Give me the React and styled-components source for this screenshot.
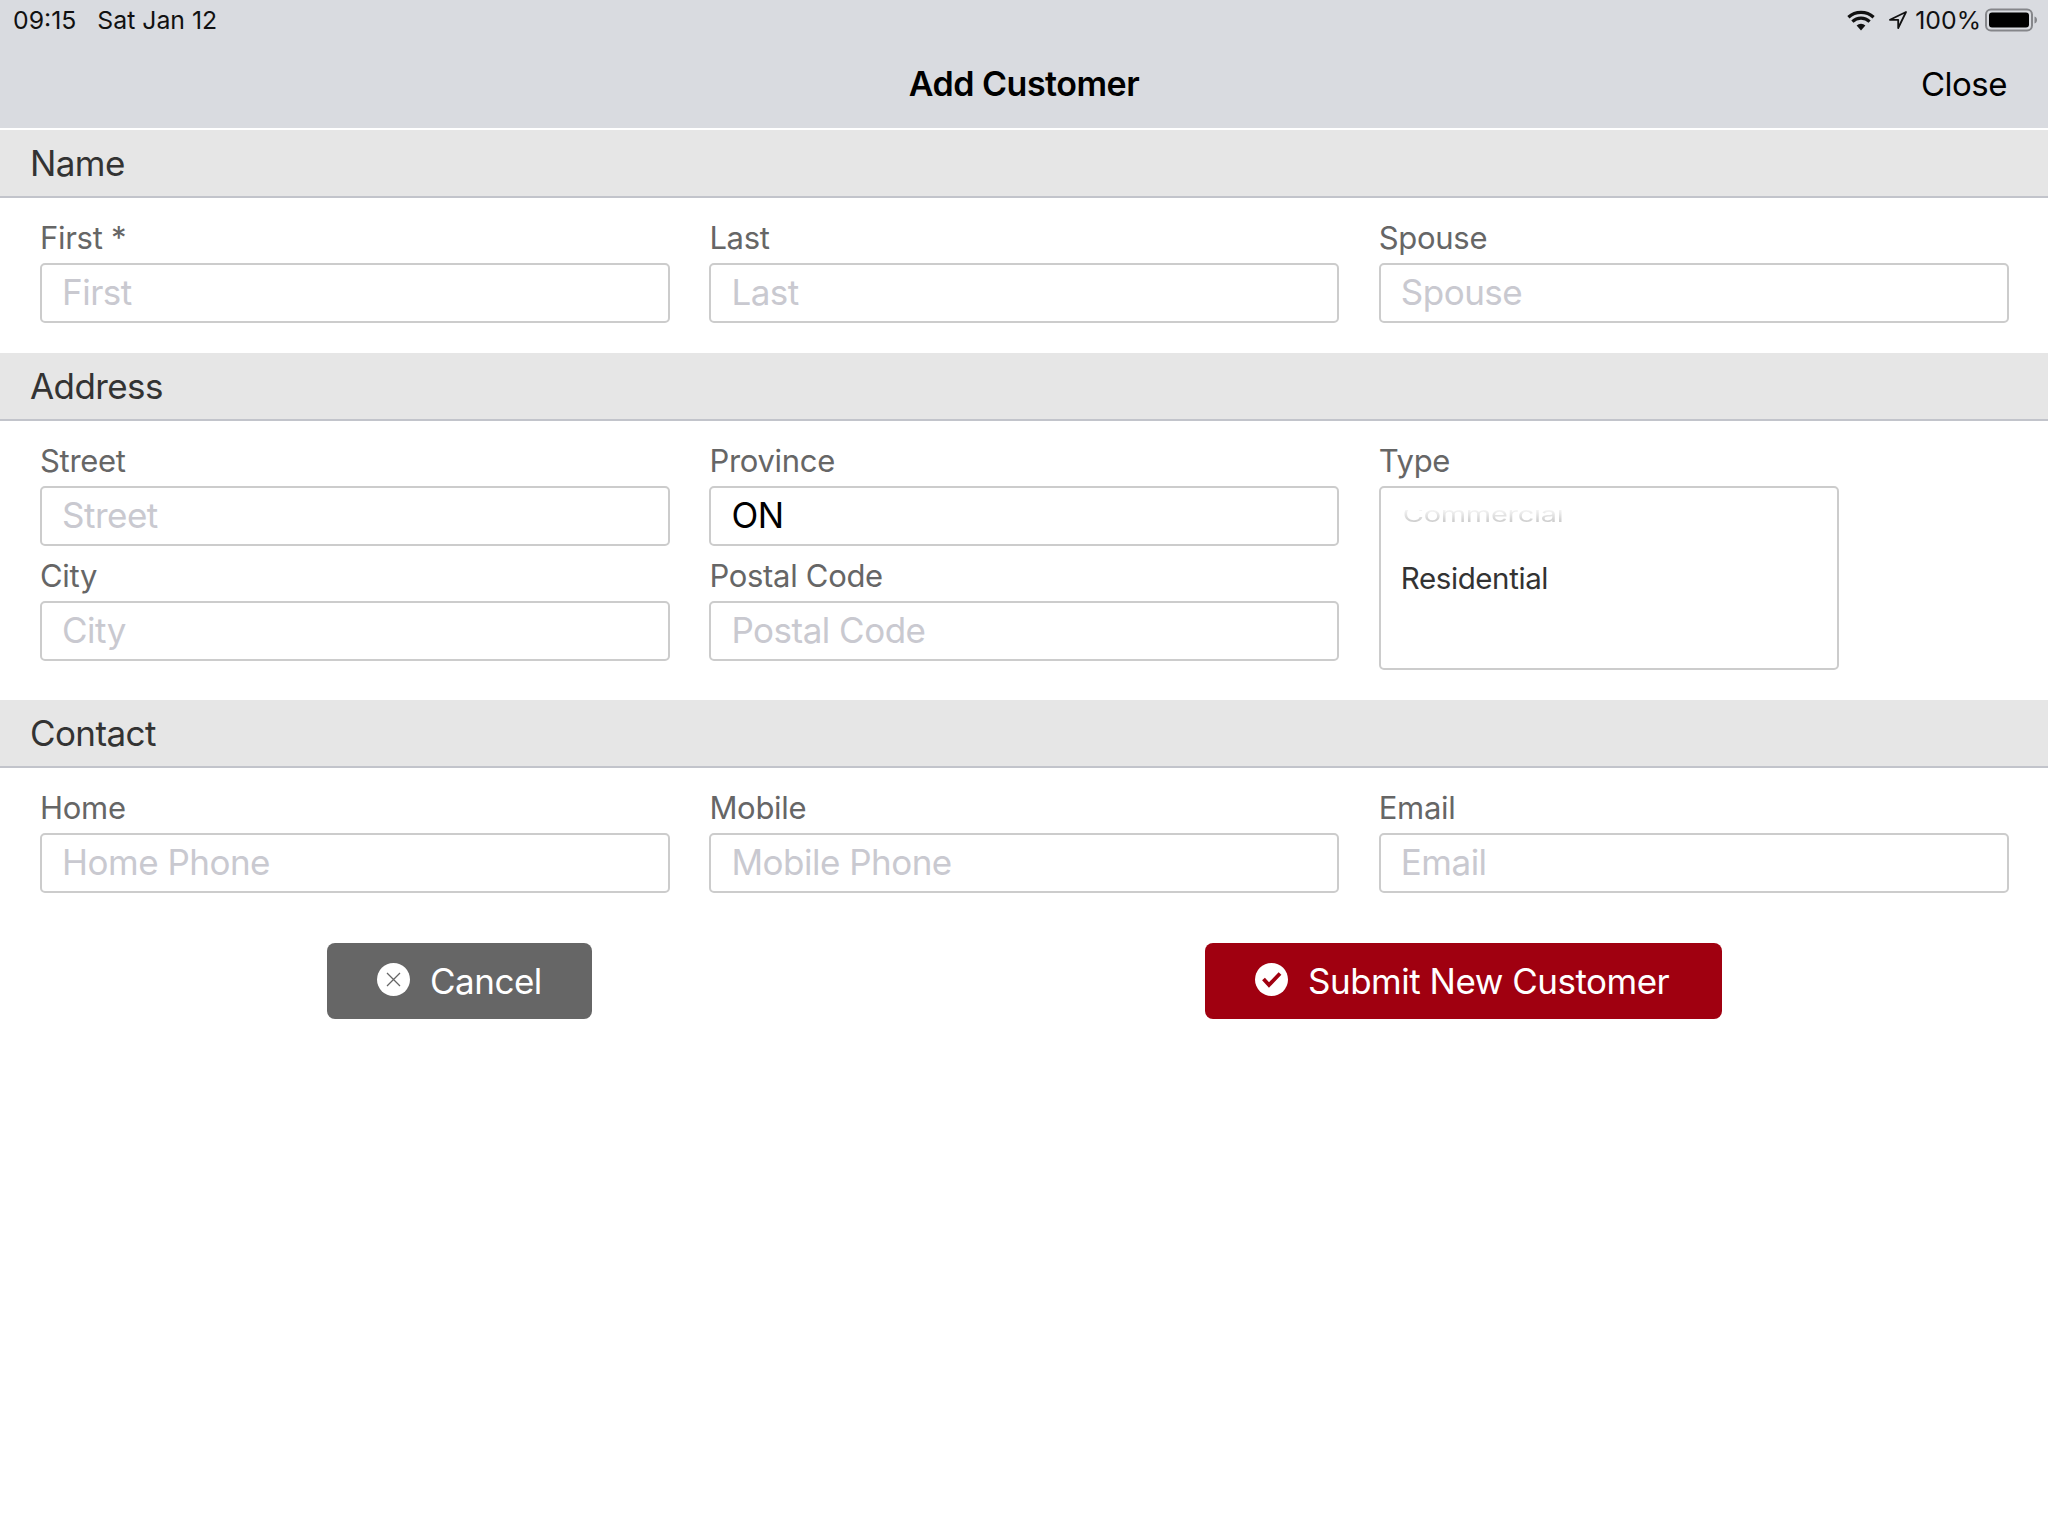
import React from 'react'
import styled, { createGlobalStyle } from 'styled-components'

const GlobalStyle = createGlobalStyle`
  html, body { margin: 0; padding: 0; background: #fff; }
  body { font-family: Inter, "Liberation Sans", sans-serif; }
  * { box-sizing: border-box; }
`

const Page = styled.div`
  width: 2048px;
  height: 1536px;
  background: #fff;
  overflow: hidden;
`

const TopBar = styled.header`
  height: 128px;
  background: #d9dbe0;
`

const StatusBar = styled.div`
  height: 40px;
  padding: 0 11px 0 13px;
  display: flex;
  align-items: center;
  justify-content: space-between;
  font-size: 24.8px;
  color: #111;
`

const StatusGroup = styled.div`
  display: flex;
  align-items: center;
  gap: ${p => p.$gap || 21}px;
  svg + svg { margin-left: 6px; }
  span + svg { margin-left: -3px; }
`

const NavBar = styled.div`
  height: 88px;
  padding: 0 41px;
  display: grid;
  grid-template-columns: 1fr auto 1fr;
  align-items: center;
  font-size: 34px;
  color: #000;
`

const NavTitle = styled.div`
  margin-bottom: 2px;
  font-weight: 600;
  letter-spacing: -0.5px;
`

const NavAction = styled.div`
  justify-self: end;
  font-size: 33px;
  letter-spacing: -0.5px;
`

const SectionHeader = styled.div`
  height: 68px;
  padding: 0 30px 1px;
  display: flex;
  align-items: center;
  font-size: 35px;
  letter-spacing: -0.6px;
  color: #333;
  background: #e6e6e6;
  border-bottom: 2px solid #c2c4cb;
  margin-top: ${p => p.$first ? 2 : 0}px;
`

const SectionBody = styled.div`
  padding: 21px 0 30px 40px;
  display: grid;
  grid-template-columns: repeat(3, 630px);
  grid-template-rows: ${p => p.$rows || 'auto'};
  column-gap: 39.4px;
  row-gap: 11px;
  align-items: start;
`

const Field = styled.div`
  display: flex;
  flex-direction: column;
`

const PickerField = styled(Field)`
  grid-column: 3;
  grid-row: 1 / span 2;
`

const Label = styled.label`
  height: 44px;
  font-size: 31px;
  line-height: 38px;
  letter-spacing: -0.3px;
  color: #666;
`

const Input = styled.input`
  width: 100%;
  height: 60px;
  padding: 0 20px 2px;
  font-family: inherit;
  font-size: 35px;
  letter-spacing: -0.5px;
  color: #000;
  background: #fff;
  border: 2px solid #ccc;
  border-radius: 5px;
  outline: none;
  &::placeholder { color: #c9c9d0; opacity: 1; }
`

const Picker = styled.div`
  width: 460px;
  height: 184px;
  padding: 0 20px;
  border: 2px solid #ccc;
  border-radius: 5px;
  overflow: hidden;
`

const FadedOption = styled.div`
  height: 34px;
  margin-top: 10px;
  padding-left: 2px;
  font-size: 29px;
  line-height: 34px;
  letter-spacing: -0.3px;
  color: transparent;
  background: linear-gradient(#f4f4f4 30%, #cfcfcf 75%);
  background-clip: text;
  -webkit-background-clip: text;
  transform: scaleY(0.72);
  clip-path: inset(30% 0 0 0);
`

const ActiveOption = styled.div`
  margin-top: 26px;
  font-size: 29.5px;
  line-height: 40px;
  letter-spacing: -0.4px;
  color: #333;
`

const Actions = styled.div`
  padding: 20px 326px 0 327px;
  display: flex;
  justify-content: space-between;
`

const Button = styled.button`
  height: 76px;
  width: ${p => p.$width}px;
  padding: 0 0 0 50px;
  display: flex;
  align-items: center;
  gap: 20px;
  border: none;
  border-radius: 8px;
  font-family: inherit;
  font-size: 35px;
  letter-spacing: -0.5px;
  color: #fff;
  background: ${p => p.$color};
  svg { margin-top: -4px; flex: none; }
`

const Wifi = () => (
  <svg width="28" height="21" viewBox="0 0 28 21">
    <path d="M14 20.5 9.6 15.4a6.6 6.6 0 0 1 8.8 0z" fill="#111" />
    <path d="M5.4 11.6a12.6 12.6 0 0 1 17.2 0" fill="none" stroke="#111" strokeWidth="3.2" />
    <path d="M1.4 7.2a18.6 18.6 0 0 1 25.2 0" fill="none" stroke="#111" strokeWidth="3.2" />
  </svg>
)

const LocationArrow = () => (
  <svg width="20" height="20" viewBox="0 0 20 20">
    <path d="M18 2 2 9.8h8.2l0 8.2z" fill="none" stroke="#111" strokeWidth="1.8" strokeLinejoin="round" />
  </svg>
)

const Battery = () => (
  <svg width="52" height="24" viewBox="0 0 52 24">
    <rect x="1" y="1.5" width="46" height="21" rx="5" fill="none" stroke="#85868a" strokeWidth="2" />
    <rect x="4" y="4.5" width="40" height="15" rx="3" fill="#000" />
    <path d="M49.5 8.5c1.6.5 2.5 1.8 2.5 3.5s-.9 3-2.5 3.5z" fill="#85868a" />
  </svg>
)

const CancelIcon = () => (
  <svg width="33" height="33" viewBox="0 0 33 33">
    <circle cx="16.5" cy="16.5" r="16.5" fill="#fff" />
    <path d="M10 10 23 23M23 10 10 23" stroke="#666" strokeWidth="1.3" />
  </svg>
)

const CheckIcon = () => (
  <svg width="33" height="33" viewBox="0 0 33 33">
    <circle cx="16.5" cy="16.5" r="16.5" fill="#fff" />
    <path d="M8.5 16 14 22 25 10.5" fill="none" stroke="#a00010" strokeWidth="3.8" />
  </svg>
)

function TextField({ label, placeholder, value }) {
  return (
    <Field>
      <Label>{label}</Label>
      <Input placeholder={placeholder} defaultValue={value} />
    </Field>
  )
}

export default function App() {
  return (
    <Page>
      <GlobalStyle />
      <TopBar>
        <StatusBar>
          <StatusGroup>
            <span>09:15</span>
            <span>Sat Jan 12</span>
          </StatusGroup>
          <StatusGroup $gap={7}>
            <Wifi />
            <LocationArrow />
            <span>100%</span>
            <Battery />
          </StatusGroup>
        </StatusBar>
        <NavBar>
          <span />
          <NavTitle>Add Customer</NavTitle>
          <NavAction>Close</NavAction>
        </NavBar>
      </TopBar>

      <SectionHeader $first>Name</SectionHeader>
      <SectionBody>
        <TextField label="First *" placeholder="First" />
        <TextField label="Last" placeholder="Last" />
        <TextField label="Spouse" placeholder="Spouse" />
      </SectionBody>

      <SectionHeader>Address</SectionHeader>
      <SectionBody $rows="104px 113px">
        <TextField label="Street" placeholder="Street" />
        <TextField label="Province" placeholder="Province" value="ON" />
        <PickerField>
          <Label>Type</Label>
          <Picker>
            <FadedOption>Commercial</FadedOption>
            <ActiveOption>Residential</ActiveOption>
          </Picker>
        </PickerField>
        <TextField label="City" placeholder="City" />
        <TextField label="Postal Code" placeholder="Postal Code" />
      </SectionBody>

      <SectionHeader>Contact</SectionHeader>
      <SectionBody>
        <TextField label="Home" placeholder="Home Phone" />
        <TextField label="Mobile" placeholder="Mobile Phone" />
        <TextField label="Email" placeholder="Email" />
      </SectionBody>

      <Actions>
        <Button $width={265} $color="#666">
          <CancelIcon />
          Cancel
        </Button>
        <Button $width={517} $color="#a00010">
          <CheckIcon />
          Submit New Customer
        </Button>
      </Actions>
    </Page>
  )
}
